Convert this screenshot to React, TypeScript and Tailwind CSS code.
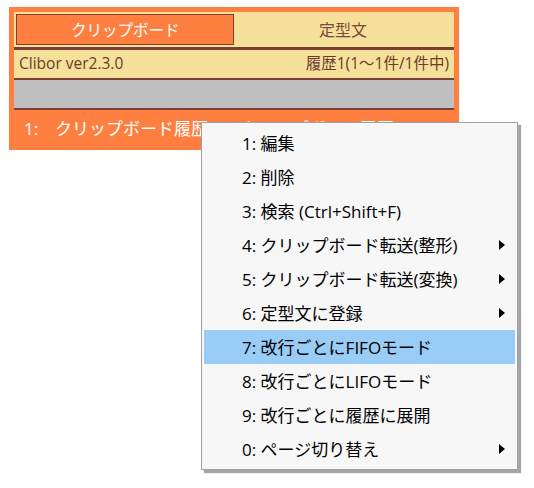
import React from "react";

type Item = { label: string; sub?: boolean; active?: boolean };

const items: Item[] = [
  { label: "1: 編集" },
  { label: "2: 削除" },
  { label: "3: 検索 (Ctrl+Shift+F)" },
  { label: "4: クリップボード転送(整形)", sub: true },
  { label: "5: クリップボード転送(変換)", sub: true },
  { label: "6: 定型文に登録", sub: true },
  { label: "7: 改行ごとにFIFOモード", active: true },
  { label: "8: 改行ごとにLIFOモード" },
  { label: "9: 改行ごとに履歴に展開" },
  { label: "0: ページ切り替え", sub: true },
];

function SubArrow() {
  return (
    <svg width="6" height="10" viewBox="0 0 6 10" className="shrink-0">
      <path d="M0 0 L6 5 L0 10 Z" fill="#000" />
    </svg>
  );
}

export default function App() {
  return (
    <div className="relative w-[534px] h-[488px] bg-white overflow-hidden font-['Open_Sans','Noto_Sans_CJK_JP',sans-serif]">
      {/* main window */}
      <div className="ml-[9px] mt-[7px] w-[450px] bg-[#fe7f3f] px-[5px] pt-[5px]">
        {/* tabs */}
        <div className="flex h-[35px] bg-[#f5e19a] p-[2px]">
          <div className="w-[218px] h-[31px] border border-[#7b4033] bg-[#fe7f3f] flex items-center justify-center text-white text-[16px] leading-none tracking-[-0.5px]">
            クリップボード
          </div>
          <div className="flex-1 flex items-center justify-center text-[#7b4a3a] text-[16px] leading-none">
            定型文
          </div>
        </div>
        <div className="h-[3px] bg-[#7b4033]" />
        {/* status */}
        <div className="h-[28px] bg-[#f5e19a] flex items-center justify-between pl-[5px] pr-[5px] text-[#6e3b2e] text-[15.5px] leading-none">
          <span>Clibor ver2.3.0</span>
          <span>履歴1(1～1件/1件中)</span>
        </div>
        <div className="h-[2px] bg-[#7b4033]" />
        <div className="h-[28px] bg-[#bfbfbf]" />
        <div className="h-[2px] bg-[#7b4033]" />
        {/* history row */}
        <div className="h-[40px] flex items-center pl-[10px] pb-[3px] text-white text-[17px] leading-none whitespace-nowrap overflow-hidden">
          <span className="w-[31px]">1:</span>
          <span>クリップボード履歴1 ↵ クリップボード履歴2</span>
        </div>
      </div>

      {/* context menu */}
      <div className="absolute left-[201px] top-[122px] w-[317px] h-[348px] border border-[#a0a0a0] bg-[#f7f7f7] shadow-[3px_3px_1px_rgba(0,0,0,0.35)] px-[2px] py-[3px]">
        {items.map((it) => (
          <div
            key={it.label}
            className={
              "h-[34px] flex items-center justify-between pl-[38px] pr-[10px] text-[17px] leading-none text-black whitespace-nowrap " +
              (it.active ? "bg-[#99ccf7]" : "")
            }
          >
            <span>{it.label}</span>
            {it.sub ? <SubArrow /> : null}
          </div>
        ))}
      </div>
    </div>
  );
}
